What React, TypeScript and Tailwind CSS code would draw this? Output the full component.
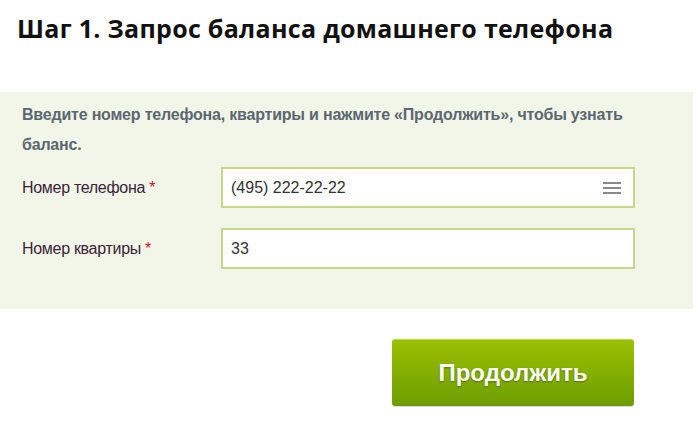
export default function App() {
  return (
    <div className="w-[698px] h-[423px] bg-white font-['Liberation_Sans',Arial,sans-serif] overflow-hidden">
      {/* Heading */}
      <h1 className="pl-[17px] pt-[11px] h-[92px] font-['Open_Sans',sans-serif] font-bold text-[25px] leading-[34px] text-[#111] tracking-[0.3px]">
        Шаг 1. Запрос баланса домашнего телефона
      </h1>

      {/* Form panel */}
      <div className="w-[693px] bg-[#f2f6e8] pt-[8px] pb-[40px] px-[22px]">
        <p className="text-[16px] leading-[30px] font-bold text-[#5b6770] pr-[40px] tracking-[-0.2px]">
          Введите номер телефона, квартиры и нажмите «Продолжить», чтобы узнать баланс.
        </p>

        <div className="flex items-center mt-[7px]">
          <label className="w-[199px] text-[16px] text-[#3a2338] tracking-[-0.3px]">
            Номер телефона <span className="text-[#c8102e]">*</span>
          </label>
          <div className="w-[414px] h-[41px] border-2 border-[#c6d68a] bg-white flex items-center justify-between pl-[8px] pr-[12px]">
            <span className="text-[16px] text-[#333]">(495) 222-22-22</span>
            <svg width="18" height="12" viewBox="0 0 18 12">
              <rect x="0" y="0" width="18" height="2" fill="#888" />
              <rect x="0" y="5" width="18" height="2" fill="#888" />
              <rect x="0" y="10" width="18" height="2" fill="#888" />
            </svg>
          </div>
        </div>

        <div className="flex items-center mt-[20px]">
          <label className="w-[199px] text-[16px] text-[#3a2338] tracking-[-0.3px]">
            Номер квартиры <span className="text-[#c8102e]">*</span>
          </label>
          <div className="w-[414px] h-[41px] border-2 border-[#c6d68a] bg-white flex items-center pl-[8px]">
            <span className="text-[16px] text-[#333]">33</span>
          </div>
        </div>
      </div>

      {/* Submit */}
      <div className="flex justify-end pr-[64px] mt-[30px]">
        <button className="w-[242px] h-[67px] rounded-[3px] border-t border-[#b9da3c] bg-gradient-to-b from-[#9cc100] to-[#6c9d00] shadow-[0_1px_1px_rgba(0,0,0,0.15)] text-white font-bold text-[24px] [text-shadow:0_1px_2px_rgba(0,0,0,0.35)]">
          Продолжить
        </button>
      </div>
    </div>
  );
}
